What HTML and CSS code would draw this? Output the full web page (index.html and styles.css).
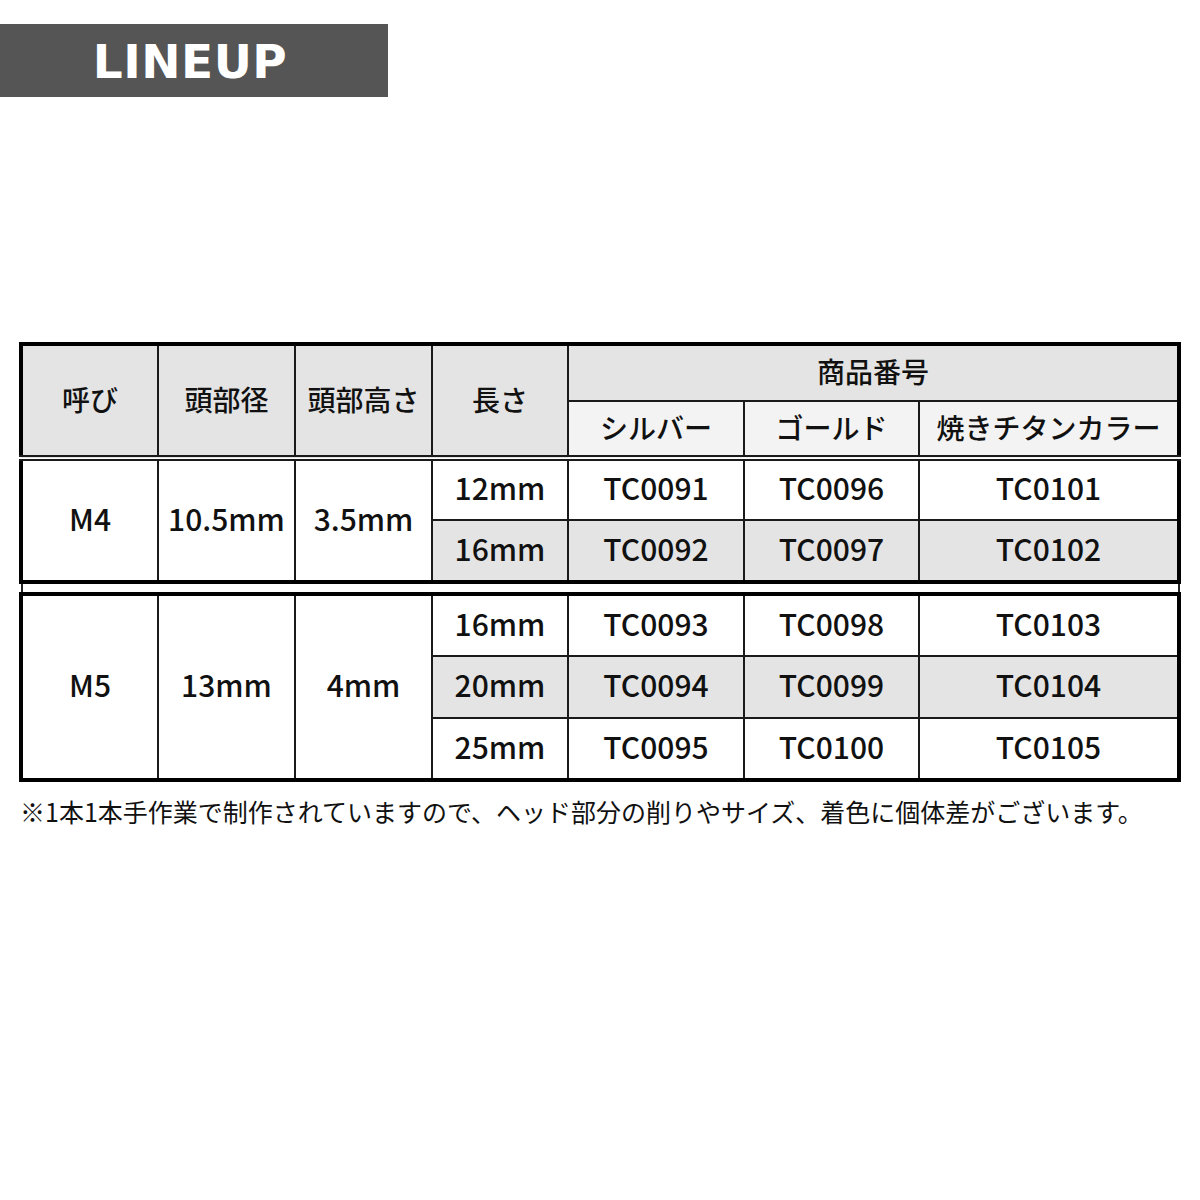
FILE: index.html
```html
<!DOCTYPE html>
<html lang="ja">
<head>
<meta charset="utf-8">
<link rel="stylesheet" href="styles.css">
</head>
<body>
<div class="title-bar"><span class="title">LINEUP</span></div>
<div class="spec">
  <table class="grid grid-top">
    <colgroup>
      <col class="c1"><col class="c2"><col class="c3"><col class="c4"><col class="c5"><col class="c6"><col class="c7">
    </colgroup>
    <thead>
      <tr class="h1">
        <th rowspan="2" class="hb">呼び</th>
        <th rowspan="2" class="hb">頭部径</th>
        <th rowspan="2" class="hb">頭部高さ</th>
        <th rowspan="2" class="hb">長さ</th>
        <th colspan="3">商品番号</th>
      </tr>
      <tr class="h2">
        <th class="sub hb">シルバー</th>
        <th class="sub hb">ゴールド</th>
        <th class="sub hb">焼きチタンカラー</th>
      </tr>
    </thead>
    <tbody>
      <tr class="r">
        <td rowspan="2" class="plain">M4</td>
        <td rowspan="2" class="plain">10.5mm</td>
        <td rowspan="2" class="plain">3.5mm</td>
        <td>12mm</td><td>TC0091</td><td>TC0096</td><td>TC0101</td>
      </tr>
      <tr class="r shade">
        <td>16mm</td><td>TC0092</td><td>TC0097</td><td>TC0102</td>
      </tr>
    </tbody>
  </table>
  <div class="gap"></div>
  <table class="grid">
    <colgroup>
      <col class="c1"><col class="c2"><col class="c3"><col class="c4"><col class="c5"><col class="c6"><col class="c7">
    </colgroup>
    <tbody>
      <tr class="r">
        <td rowspan="3" class="plain">M5</td>
        <td rowspan="3" class="plain">13mm</td>
        <td rowspan="3" class="plain">4mm</td>
        <td>16mm</td><td>TC0093</td><td>TC0098</td><td>TC0103</td>
      </tr>
      <tr class="r shade">
        <td>20mm</td><td>TC0094</td><td>TC0099</td><td>TC0104</td>
      </tr>
      <tr class="r">
        <td>25mm</td><td>TC0095</td><td>TC0100</td><td>TC0105</td>
      </tr>
    </tbody>
  </table>
</div>
<p class="note">※1本1本手作業で制作されていますので、ヘッド部分の削りやサイズ、着色に個体差がございます。</p>
</body>
</html>
```
FILE: styles.css
```css
html, body {
  margin: 0;
  padding: 0;
  background: #fff;
}

body {
  font-family: "Noto Sans CJK JP", "Noto Sans", sans-serif;
  color: #111;
}

.title-bar {
  margin-top: 24px;
  width: 388px;
  height: 73px;
  background: #555555;
  display: flex;
  align-items: center;
  justify-content: center;
}

.title {
  font-family: "DejaVu Sans", sans-serif;
  font-weight: bold;
  font-size: 47px;
  color: #fff;
  line-height: 1;
  padding-top: 2px;
  padding-right: 8px;
  letter-spacing: 0.5px;
}

.spec {
  margin: 245px 0 0 19px;
  width: 1162px;
}

.grid {
  width: 100%;
  border-collapse: collapse;
  table-layout: fixed;
  border: 4px solid #000;
}

.c1, .c2, .c3 { width: 137px; }
.c4 { width: 136px; }
.c5 { width: 176px; }
.c6 { width: 175px; }

.grid th,
.grid td {
  border: 2px solid #1a1a1a;
  padding: 0 0 6px 0;
  text-align: center;
  vertical-align: middle;
  font-size: 30px;
  font-weight: 500;
  line-height: 1;
  background: #fff;
}

.grid th {
  font-size: 28px;
  padding-bottom: 4px;
  background: #e4e4e4;
}

.grid th.sub {
  background: #f3f3f3;
}

.grid th.hb {
  border-bottom: 6px double #1a1a1a;
}

.h1 { height: 57px; }
.h2 { height: 57px; }
.r { height: 62px; }

.grid tr.shade td {
  background: #e4e4e4;
}

.grid td.plain {
  background: #fff;
}

.gap {
  height: 8px;
  margin: 0 1px 0 2px;
  border-left: 2px solid #222;
  border-right: 2px solid #222;
}

.note {
  margin: 14px 0 0 20px;
  font-family: "Noto Sans CJK JP", sans-serif;
  font-size: 25px;
  line-height: 1.2;
  color: #111;
}
```
